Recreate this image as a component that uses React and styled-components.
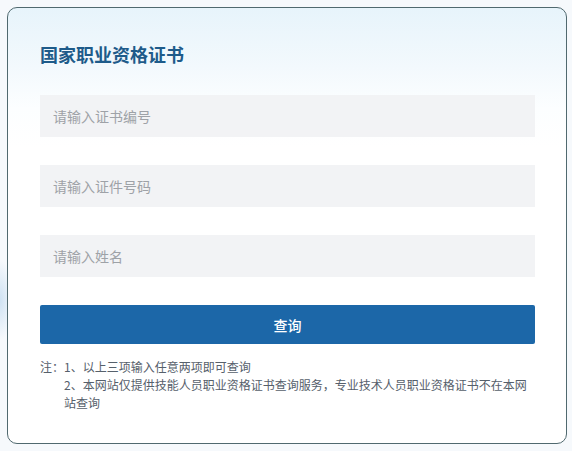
import React from "react";
import styled, { createGlobalStyle } from "styled-components";

const Global = createGlobalStyle`
  html, body { margin: 0; padding: 0; }
  body {
    width: 572px;
    height: 451px;
    overflow: hidden;
    font-family: "Noto Sans CJK SC", "Noto Sans", sans-serif;
    background:
      radial-gradient(ellipse 14px 40px at 0px 300px, #cfe2f3 0%, rgba(207,226,243,0) 100%),
      #f6f9fc;
  }
  * { box-sizing: border-box; }
`;

const Page = styled.div`
  padding: 7px 5px 7px 7px;
`;

const Card = styled.div`
  width: 560px;
  height: 437px;
  border: 1px solid #50696f;
  border-radius: 10px;
  background: linear-gradient(180deg, #e7f4fb 0px, #f3f9fd 60px, #fcfeff 100px, #ffffff 140px);
  padding: 34px 31px 0 32px;
  display: flex;
  flex-direction: column;
`;

const Title = styled.h1`
  margin: 0 0 29px;
  font-size: 18px;
  line-height: 24px;
  font-weight: 700;
  color: #1e5b8a;
`;

const Field = styled.input`
  display: block;
  width: 100%;
  height: 42px;
  margin: 0 0 28px;
  padding: 0 13px;
  border: none;
  outline: none;
  background: #f2f3f5;
  font-family: inherit;
  font-size: 14px;
  color: #333;
  &::placeholder { color: #9ea2a7; }
`;

const Button = styled.button`
  display: block;
  width: 100%;
  height: 39px;
  border: none;
  border-radius: 2px;
  background: #1c67a8;
  color: #fff;
  font-family: inherit;
  font-size: 14px;
  font-weight: 500;
  cursor: pointer;
`;

const Notes = styled.div`
  margin-top: 14px;
  display: flex;
  font-size: 12px;
  line-height: 18px;
  color: #56606b;
`;

const NoteLabel = styled.span`
  flex: none;
`;

const NoteList = styled.div`
  flex: 1;
`;

const NoteLine = styled.div``;

export default function App() {
  return (
    <>
      <Global />
      <Page>
        <Card>
          <Title>国家职业资格证书</Title>
          <Field placeholder="请输入证书编号" />
          <Field placeholder="请输入证件号码" />
          <Field placeholder="请输入姓名" />
          <Button>查询</Button>
          <Notes>
            <NoteLabel>注：</NoteLabel>
            <NoteList>
              <NoteLine>1、以上三项输入任意两项即可查询</NoteLine>
              <NoteLine>2、本网站仅提供技能人员职业资格证书查询服务，专业技术人员职业资格证书不在本网站查询</NoteLine>
            </NoteList>
          </Notes>
        </Card>
      </Page>
    </>
  );
}
